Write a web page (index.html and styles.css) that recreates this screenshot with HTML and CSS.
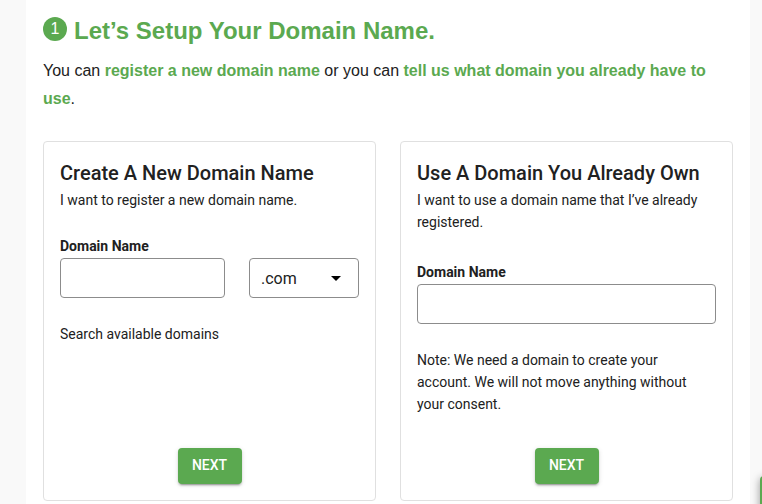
FILE: index.html
```html
<!DOCTYPE html>
<html lang="en">
<head>
<meta charset="utf-8">
<title>Domain Setup</title>
<link rel="stylesheet" href="styles.css">
</head>
<body>
<main class="page">
  <h1 class="title"><span class="step">1</span>Let’s Setup Your Domain Name.</h1>
  <p class="intro">You can <a href="#new">register a new domain name</a> or you can <a href="#own">tell us what domain you already have to use</a>.</p>
  <div class="cards">
    <form class="card" id="new">
      <h2>Create A New Domain Name</h2>
      <p>I want to register a new domain name.</p>
      <label class="label" for="new-name">Domain Name</label>
      <div class="fields">
        <input class="field" id="new-name" type="text">
        <div class="select">
          <select class="field" aria-label="Domain ending"><option>.com</option></select>
          <svg class="arrow" viewBox="0 0 24 24" aria-hidden="true"><path d="M7 10l5 5 5-5z"/></svg>
        </div>
      </div>
      <p class="note">Search available domains</p>
      <button class="next" type="button">NEXT</button>
    </form>
    <form class="card card-own" id="own">
      <h2>Use A Domain You Already Own</h2>
      <p>I want to use a domain name that I’ve already registered.</p>
      <label class="label" for="own-name">Domain Name</label>
      <input class="field" id="own-name" type="text">
      <p class="note">Note: We need a domain to create your account. We will not move anything without your consent.</p>
      <button class="next" type="button">NEXT</button>
    </form>
  </div>
</main>
<button class="chat" type="button" aria-label="Chat"></button>
</body>
</html>
```
FILE: styles.css
```css
* { box-sizing: border-box; }
body {
  margin: 0;
  background: #f9f9f9;
  color: #212121;
  font-family: Roboto, sans-serif;
  overflow: hidden;
}
h1, h2, p { margin: 0; }
.page {
  margin: 0 12px 0 26px;
  padding: 13px 17px 24px;
  background: #fff;
}
.title {
  display: flex;
  align-items: center;
  gap: 7px;
  color: #5ba950;
  font: bold 24px/36px "Liberation Sans", sans-serif;
}
.step {
  width: 24px;
  height: 24px;
  margin-bottom: 4px;
  border-radius: 50%;
  background: #5ba950;
  color: #fff;
  font: 16px/24px "Liberation Sans", sans-serif;
  text-align: center;
}
.intro {
  margin-top: 8px;
  font: 16px/28px "Liberation Sans", sans-serif;
}
.intro a {
  color: #5ba950;
  font-weight: bold;
  text-decoration: none;
}
.cards {
  display: grid;
  grid-template-columns: 1fr 1fr;
  gap: 24px;
  margin-top: 28px;
}
.card {
  display: flex;
  flex-direction: column;
  min-height: 360px;
  padding: 15px 16px 16px;
  border: 1px solid #e0e0e0;
  border-radius: 4px;
  font-size: 14px;
  line-height: 22px;
}
.card h2 {
  font-size: 20px;
  font-weight: 500;
  line-height: 32px;
}
.label {
  margin: 24px 0 1px;
  font-weight: 700;
}
.card-own .label { margin-top: 28px; }
.fields {
  display: grid;
  grid-template-columns: 3fr 2fr;
  gap: 24px;
}
.field {
  width: 100%;
  height: 40px;
  padding: 0 11px;
  border: 1px solid #8c8c8c;
  border-radius: 4px;
  background: #fff;
  color: #212121;
  font: 16px Roboto, sans-serif;
}
.select { position: relative; }
select.field { appearance: none; }
.arrow {
  position: absolute;
  top: 8px;
  right: 11px;
  width: 24px;
  height: 24px;
  pointer-events: none;
}
.note {
  margin-top: 25px;
  padding-right: 12px;
}
.next {
  align-self: center;
  width: 64px;
  height: 36px;
  margin-top: auto;
  padding: 0 0 2px;
  border: 0;
  border-radius: 4px;
  background: #5ba950;
  color: #fff;
  font: 500 14px Roboto, sans-serif;
  box-shadow: 0 3px 1px -2px rgba(0,0,0,.2), 0 2px 2px rgba(0,0,0,.14), 0 1px 5px rgba(0,0,0,.12);
}
.chat {
  position: fixed;
  right: -58px;
  bottom: -32px;
  width: 60px;
  height: 60px;
  padding: 0;
  border: 0;
  border-radius: 4px;
  background: #5ba950;
  box-shadow: 0 2px 8px rgba(0,0,0,.4);
}
```
